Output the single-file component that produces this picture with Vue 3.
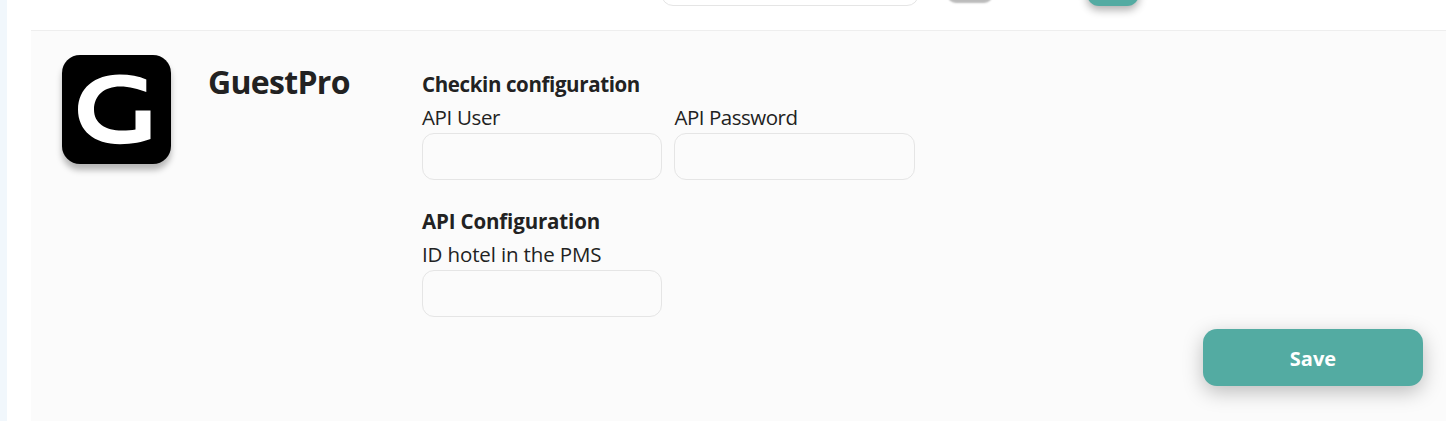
<script setup>
const groups = [
  {
    title: 'Checkin configuration',
    cls: 'checkin',
    fields: [
      { label: 'API User', cls: 'user' },
      { label: 'API Password', cls: 'password' },
    ],
  },
  {
    title: 'API Configuration',
    cls: 'api',
    fields: [{ label: 'ID hotel in the PMS', cls: 'hotel' }],
  },
]
</script>

<template>
  <div class="page">
    <main class="sheet">
      <div class="previous">
        <input class="prev-input" type="text" />
        <span class="prev-toggle"></span>
        <span class="prev-button"></span>
      </div>
      <section class="panel">
        <div class="logo">
          <svg viewBox="0 0 109 109" width="109" height="109" aria-hidden="true">
            <path
              d="M84.3 24.5V37C76.500 34 67.500 31.500 58 31.500C42.500 31.500 32 40.500 32 54.500C32 68.500 43.500 75.500 60 75.500C65.500 75.500 70 75.200 73.500 74.500V55.500H88.500V84C80.500 87 70.500 89.200 58 89.200C31.500 89.200 16 75 16 54.500C16 33.500 32.500 19.500 57.500 19.500C68 19.500 77 21.300 84.300 24.500Z"
              fill="#fff"
            />
          </svg>
        </div>
        <h2 class="name">GuestPro</h2>
        <div class="config">
          <div v-for="g in groups" :key="g.title" class="group">
            <h3 class="title" :class="g.cls">{{ g.title }}</h3>
            <div class="fields">
              <label v-for="f in g.fields" :key="f.label" class="field">
                <span class="label" :class="f.cls">{{ f.label }}</span>
                <input type="text" />
              </label>
            </div>
          </div>
        </div>
        <button class="save" type="button">Save</button>
      </section>
    </main>
  </div>
</template>

<style>
body {
  margin: 0;
  background: #fff;
}
</style>

<style scoped>
.page {
  box-sizing: border-box;
  height: 421px;
  overflow: hidden;
  border-left: 7px solid #f1f7fc;
  padding: 0 1px 0 24px;
  background: #fff;
  color: #222;
  font-family: 'Segoe UI', 'Open Sans', sans-serif;
}
.sheet {
  display: flex;
  flex-direction: column;
  height: 100%;
}
.previous {
  display: flex;
  align-items: flex-end;
  box-sizing: border-box;
  height: 30px;
  padding-left: 630px;
}
input {
  box-sizing: border-box;
  width: 100%;
  height: 47px;
  margin: 0;
  border: 1px solid #e5e5e5;
  border-radius: 12px;
  background: transparent;
  outline: none;
}
.prev-input {
  flex: none;
  width: 258px;
  margin-bottom: 24px;
}
.prev-toggle {
  width: 46px;
  height: 46px;
  margin: 0 0 30px 28px;
  border-radius: 9px;
  background: #bbb;
  box-shadow: 0 3px 2px #bbb;
}
.prev-button {
  width: 52px;
  height: 52px;
  margin: 0 0 24px 94px;
  border-radius: 12px;
  background: #53aba2;
  box-shadow: 0 4px 9px rgba(0, 0, 0, 0.32);
}
.panel {
  display: grid;
  grid-template-columns: 109px 177px 493px 1fr;
  column-gap: 37px;
  align-items: start;
  box-sizing: border-box;
  flex: 1;
  padding: 24px 23px 0 31px;
  border-top: 1px solid #eee;
  background: #fbfbfb;
}
.logo {
  width: 109px;
  height: 109px;
  border-radius: 18px;
  background: #000;
  box-shadow: 0 6px 6px rgba(0, 0, 0, 0.28);
}
.logo svg {
  display: block;
}
.name {
  margin: 5px 0 0;
  font-size: 32px;
  font-weight: 700;
  line-height: 44px;
  letter-spacing: -0.7px;
  white-space: nowrap;
}
.config {
  display: flex;
  flex-direction: column;
  gap: 24px;
  padding-top: 12px;
}
.title {
  margin: 0;
  font-size: 20.5px;
  font-weight: 700;
  line-height: 34px;
  white-space: nowrap;
}
.title.checkin {
  letter-spacing: -0.38px;
}
.title.api {
  letter-spacing: -0.15px;
}
.fields {
  display: grid;
  grid-template-columns: 240px 241px;
  gap: 12px;
}
.field {
  display: flex;
  flex-direction: column;
}
.label {
  font-size: 20.5px;
  font-weight: 400;
  line-height: 32px;
  white-space: nowrap;
}
.label.user {
  letter-spacing: -0.35px;
}
.label.password {
  padding-left: 0.5px;
  letter-spacing: -0.48px;
}
.label.hotel {
  letter-spacing: -0.14px;
}
.save {
  justify-self: end;
  width: 220px;
  height: 57px;
  margin: 274px 0 0;
  padding: 2px 0 0;
  border: 0;
  border-radius: 14px;
  background: #53aba2;
  box-shadow: 0 6px 20px rgba(0, 0, 0, 0.25);
  color: #fff;
  font-family: inherit;
  font-size: 20px;
  font-weight: 700;
  line-height: 55px;
}
</style>
